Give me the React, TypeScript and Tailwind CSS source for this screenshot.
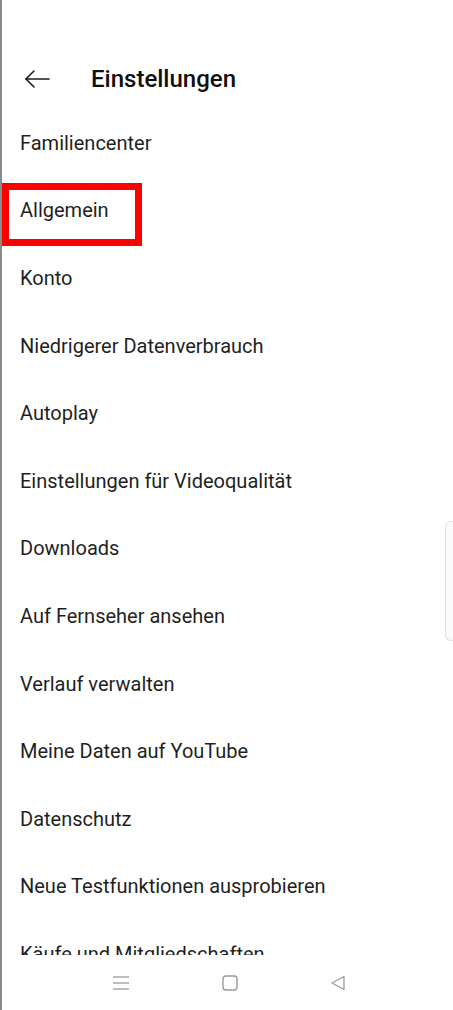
import React from "react";

const items = [
  "Familiencenter",
  "Allgemein",
  "Konto",
  "Niedrigerer Datenverbrauch",
  "Autoplay",
  "Einstellungen für Videoqualität",
  "Downloads",
  "Auf Fernseher ansehen",
  "Verlauf verwalten",
  "Meine Daten auf YouTube",
  "Datenschutz",
  "Neue Testfunktionen ausprobieren",
  "Käufe und Mitgliedschaften",
];

export default function App() {
  return (
    <div
      className="relative flex h-[1010px] w-[453px] flex-col overflow-hidden bg-white border-l-2 border-[#8a8a8a]"
      style={{ fontFamily: "Roboto, 'Noto Sans', sans-serif" }}
    >
      <div className="flex-1 overflow-hidden">
        <div className="flex h-[56px] mt-[51px] items-center">
          <div className="flex w-[89px] items-center pl-[22px]">
            <svg width="26" height="20" viewBox="0 0 26 20" fill="none" stroke="#1a1a1a" strokeWidth="1.6" strokeLinecap="round" strokeLinejoin="round">
              <path d="M25 10H2" />
              <path d="M10 2L2 10L10 18" />
            </svg>
          </div>
          <div className="text-[24px] font-medium text-[#0f0f0f]">Einstellungen</div>
        </div>
        <div className="mt-[2px] flex flex-col">
          {items.map((t, i) => (
            <div key={t} className="relative flex h-[67.6px] items-center pl-[18px] text-[20px] text-[#1f1f1f]">
              {i === 1 && (
                <div className="absolute left-0 top-[6px] h-[63px] w-[140px] border-[7px] border-[#ff0000]" />
              )}
              <span className="relative whitespace-nowrap">{t}</span>
            </div>
          ))}
        </div>
      </div>
      <div className="flex h-[55px] items-center bg-white">
        <div className="flex w-full items-center justify-between pl-[110px] pr-[107px]">
          <svg width="18" height="16" viewBox="0 0 18 16" fill="none" stroke="#9a9a9a" strokeWidth="1.3">
            <path d="M1 2H17" />
            <path d="M1 8H17" />
            <path d="M1 14H17" />
          </svg>
          <svg width="16" height="16" viewBox="0 0 16 16" fill="none" stroke="#9a9a9a" strokeWidth="1.4">
            <rect x="1" y="1" width="14" height="14" rx="3" />
          </svg>
          <svg width="16" height="16" viewBox="0 0 16 16" fill="none" stroke="#9a9a9a" strokeWidth="1.3" strokeLinejoin="round">
            <path d="M14 1.5V14.5L2 8Z" />
          </svg>
        </div>
      </div>
      <div className="absolute right-0 top-[521px] h-[120px] w-[8px] rounded-l-[6px] border border-r-0 border-[#e2e2e2] bg-[#fafafa]" />
    </div>
  );
}
